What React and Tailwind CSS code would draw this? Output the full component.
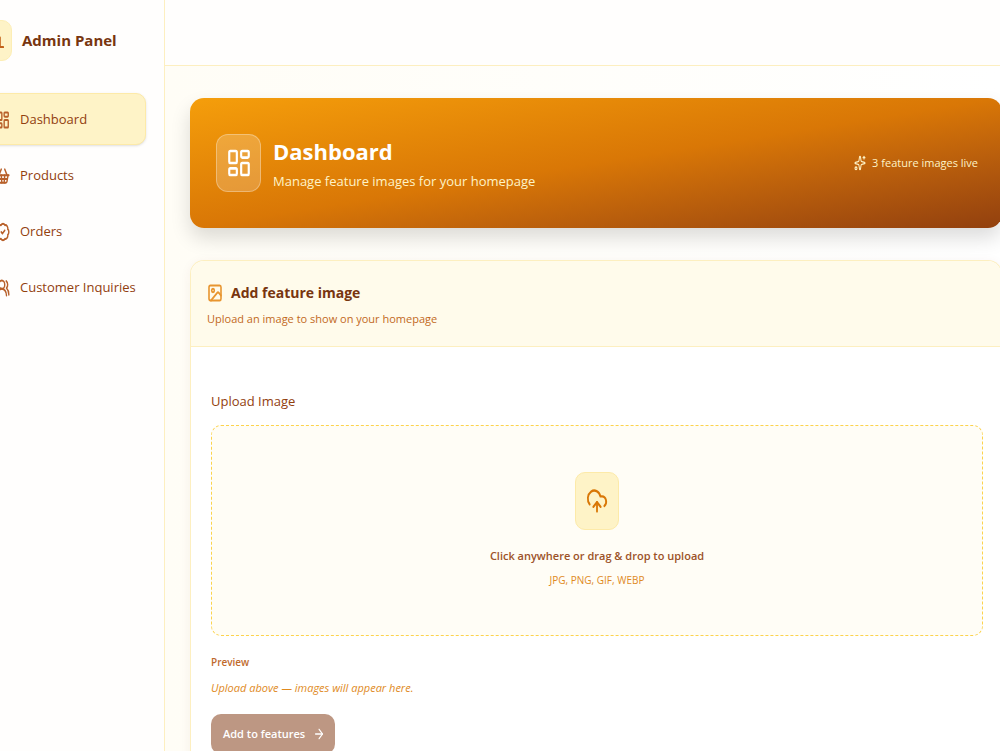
import React from "react";
import {
  LayoutDashboard,
  ShoppingBasket,
  BadgeCheck,
  UsersRound,
  Sparkles,
  Image as ImageIcon,
  CloudUpload,
  ArrowRight,
} from "lucide-react";

const navItems = [
  { label: "Dashboard", icon: LayoutDashboard, active: true },
  { label: "Products", icon: ShoppingBasket },
  { label: "Orders", icon: BadgeCheck },
  { label: "Customer Inquiries", icon: UsersRound },
];

function BrandIcon() {
  return (
    <svg
      viewBox="0 0 24 24"
      preserveAspectRatio="none"
      fill="none"
      stroke="currentColor"
      strokeWidth="2.4"
      strokeLinecap="round"
      strokeLinejoin="round"
      className="h-5 w-4"
      aria-hidden="true"
    >
      <path d="M2 20.5h21" />
      <path d="M4 20V9l7-5 7 5v11" />
      <path d="M9 20v-6h5v6" />
    </svg>
  );
}

function Sidebar() {
  return (
    <aside className="w-[165px] shrink-0 overflow-hidden border-r border-[#fdefc0] bg-[#fffefd]">
      <div className="-ml-5 flex h-20 items-center gap-2.5">
        <span className="flex h-[41px] w-8 shrink-0 items-center justify-center rounded-[10px] border border-[#fdeeb5] bg-[#fef3c7] text-[#c2611a]">
          <BrandIcon />
        </span>
        <span className="whitespace-nowrap text-[15px] font-bold text-[#78350f]">Admin Panel</span>
      </div>
      <nav className="-ml-4 mr-[18px] mt-[13px] flex flex-col gap-1">
        {navItems.map(({ label, icon: Icon, active }) => (
          <a
            key={label}
            href="#"
            className={
              active
                ? "flex h-[52px] items-center gap-2.5 rounded-[10px] border border-[#fdeaa8] bg-[#fef3c7] pl-[11px] pt-0.5 text-[13px] text-[#92400e] shadow-sm"
                : "flex h-[52px] items-center gap-2.5 rounded-[10px] border border-transparent pl-[11px] pt-0.5 text-[13px] text-[#92400e]"
            }
          >
            <Icon
              preserveAspectRatio="none"
              strokeWidth={2.4}
              className="h-5 w-[14px] shrink-0 text-[#b8602a]"
            />
            <span className="whitespace-nowrap">{label}</span>
          </a>
        ))}
      </nav>
    </aside>
  );
}

function Hero() {
  return (
    <section className="flex h-[130px] items-center justify-between rounded-[14px] bg-gradient-to-br from-[#f59e0b] via-[#d97706] to-[#92400e] pl-[26px] pr-6 shadow-[0_10px_20px_rgba(0,0,0,0.14)]">
      <div className="flex items-center gap-3">
        <span className="flex h-[58px] w-[45px] items-center justify-center rounded-xl border border-white/30 bg-white/20 text-white">
          <LayoutDashboard preserveAspectRatio="none" className="h-8 w-[26px]" />
        </span>
        <div className="pt-1">
          <h1 className="text-[22px] font-bold leading-8 text-white">Dashboard</h1>
          <p className="text-[13px] leading-7 text-[#fef3c7]">Manage feature images for your homepage</p>
        </div>
      </div>
      <div className="flex items-center gap-1.5 text-[11px] text-[#fef3c7]">
        <Sparkles preserveAspectRatio="none" className="h-4 w-3" />
        <span>3 feature images live</span>
      </div>
    </section>
  );
}

function FeatureCard() {
  return (
    <section className="mt-8 rounded-t-[14px] border border-b-0 border-[#fdefc0] bg-white shadow-[0_2px_12px_rgba(120,53,15,0.06)]">
      <header className="h-[86px] rounded-t-[13px] border-b border-[#fdefc0] bg-[#fffbeb] px-4 pt-5">
        <h2 className="flex items-center gap-2 text-sm font-bold leading-6 text-[#78350f]">
          <ImageIcon
            preserveAspectRatio="none"
            strokeWidth={2.4}
            className="h-5 w-4 text-[#e8952f]"
          />
          Add feature image
        </h2>
        <p className="text-[11px] leading-7 text-[#c2691c]">Upload an image to show on your homepage</p>
      </header>
      <div className="pb-6 pl-5 pr-[18px] pt-10">
        <label htmlFor="feature-upload" className="block text-[13px] leading-7 text-[#92400e]">
          Upload Image
        </label>
        <label
          htmlFor="feature-upload"
          className="mt-[10px] flex h-[211px] cursor-pointer flex-col items-center rounded-[10px] border border-dashed border-[#fcd34d] bg-[#fffdf6] pt-[46px]"
        >
          <span className="flex h-[58px] w-[44px] items-center justify-center rounded-[10px] border border-[#fdeaa8] bg-[#fef3c7] text-[#d97706]">
            <CloudUpload preserveAspectRatio="none" className="h-7 w-[22px]" />
          </span>
          <span className="mt-3.5 text-[11px] font-semibold leading-6 text-[#9c5228]">
            Click anywhere or drag &amp; drop to upload
          </span>
          <span className="text-[10px] leading-6 text-[#e08a1e]">JPG, PNG, GIF, WEBP</span>
          <input id="feature-upload" type="file" className="sr-only" />
        </label>
        <h3 className="mt-3.5 text-[10px] font-semibold leading-6 text-[#c06a2c]">Preview</h3>
        <p className="text-[11px] italic leading-7 text-[#e08a1e]">Upload above — images will appear here.</p>
        <button
          type="button"
          className="mt-3 flex h-10 items-center gap-2 rounded-[10px] bg-[#bd9783] pl-3 pr-2.5 text-[11px] font-semibold text-white"
        >
          Add to features
          <ArrowRight preserveAspectRatio="none" className="h-4 w-3" />
        </button>
      </div>
    </section>
  );
}

export default function App() {
  return (
    <div className="flex h-screen overflow-hidden bg-[#fffefa] font-['Open_Sans','Noto_Sans',sans-serif]">
      <Sidebar />
      <div className="flex min-w-0 flex-1 flex-col">
        <header className="h-[66px] shrink-0 border-b border-[#fdefc0] bg-[#fffefd]" />
        <main className="flex-1 overflow-hidden bg-gradient-to-r from-[#fffdf6] to-white pl-[25px] pt-8">
          <div className="-mr-0.5">
            <Hero />
            <FeatureCard />
          </div>
        </main>
      </div>
    </div>
  );
}
